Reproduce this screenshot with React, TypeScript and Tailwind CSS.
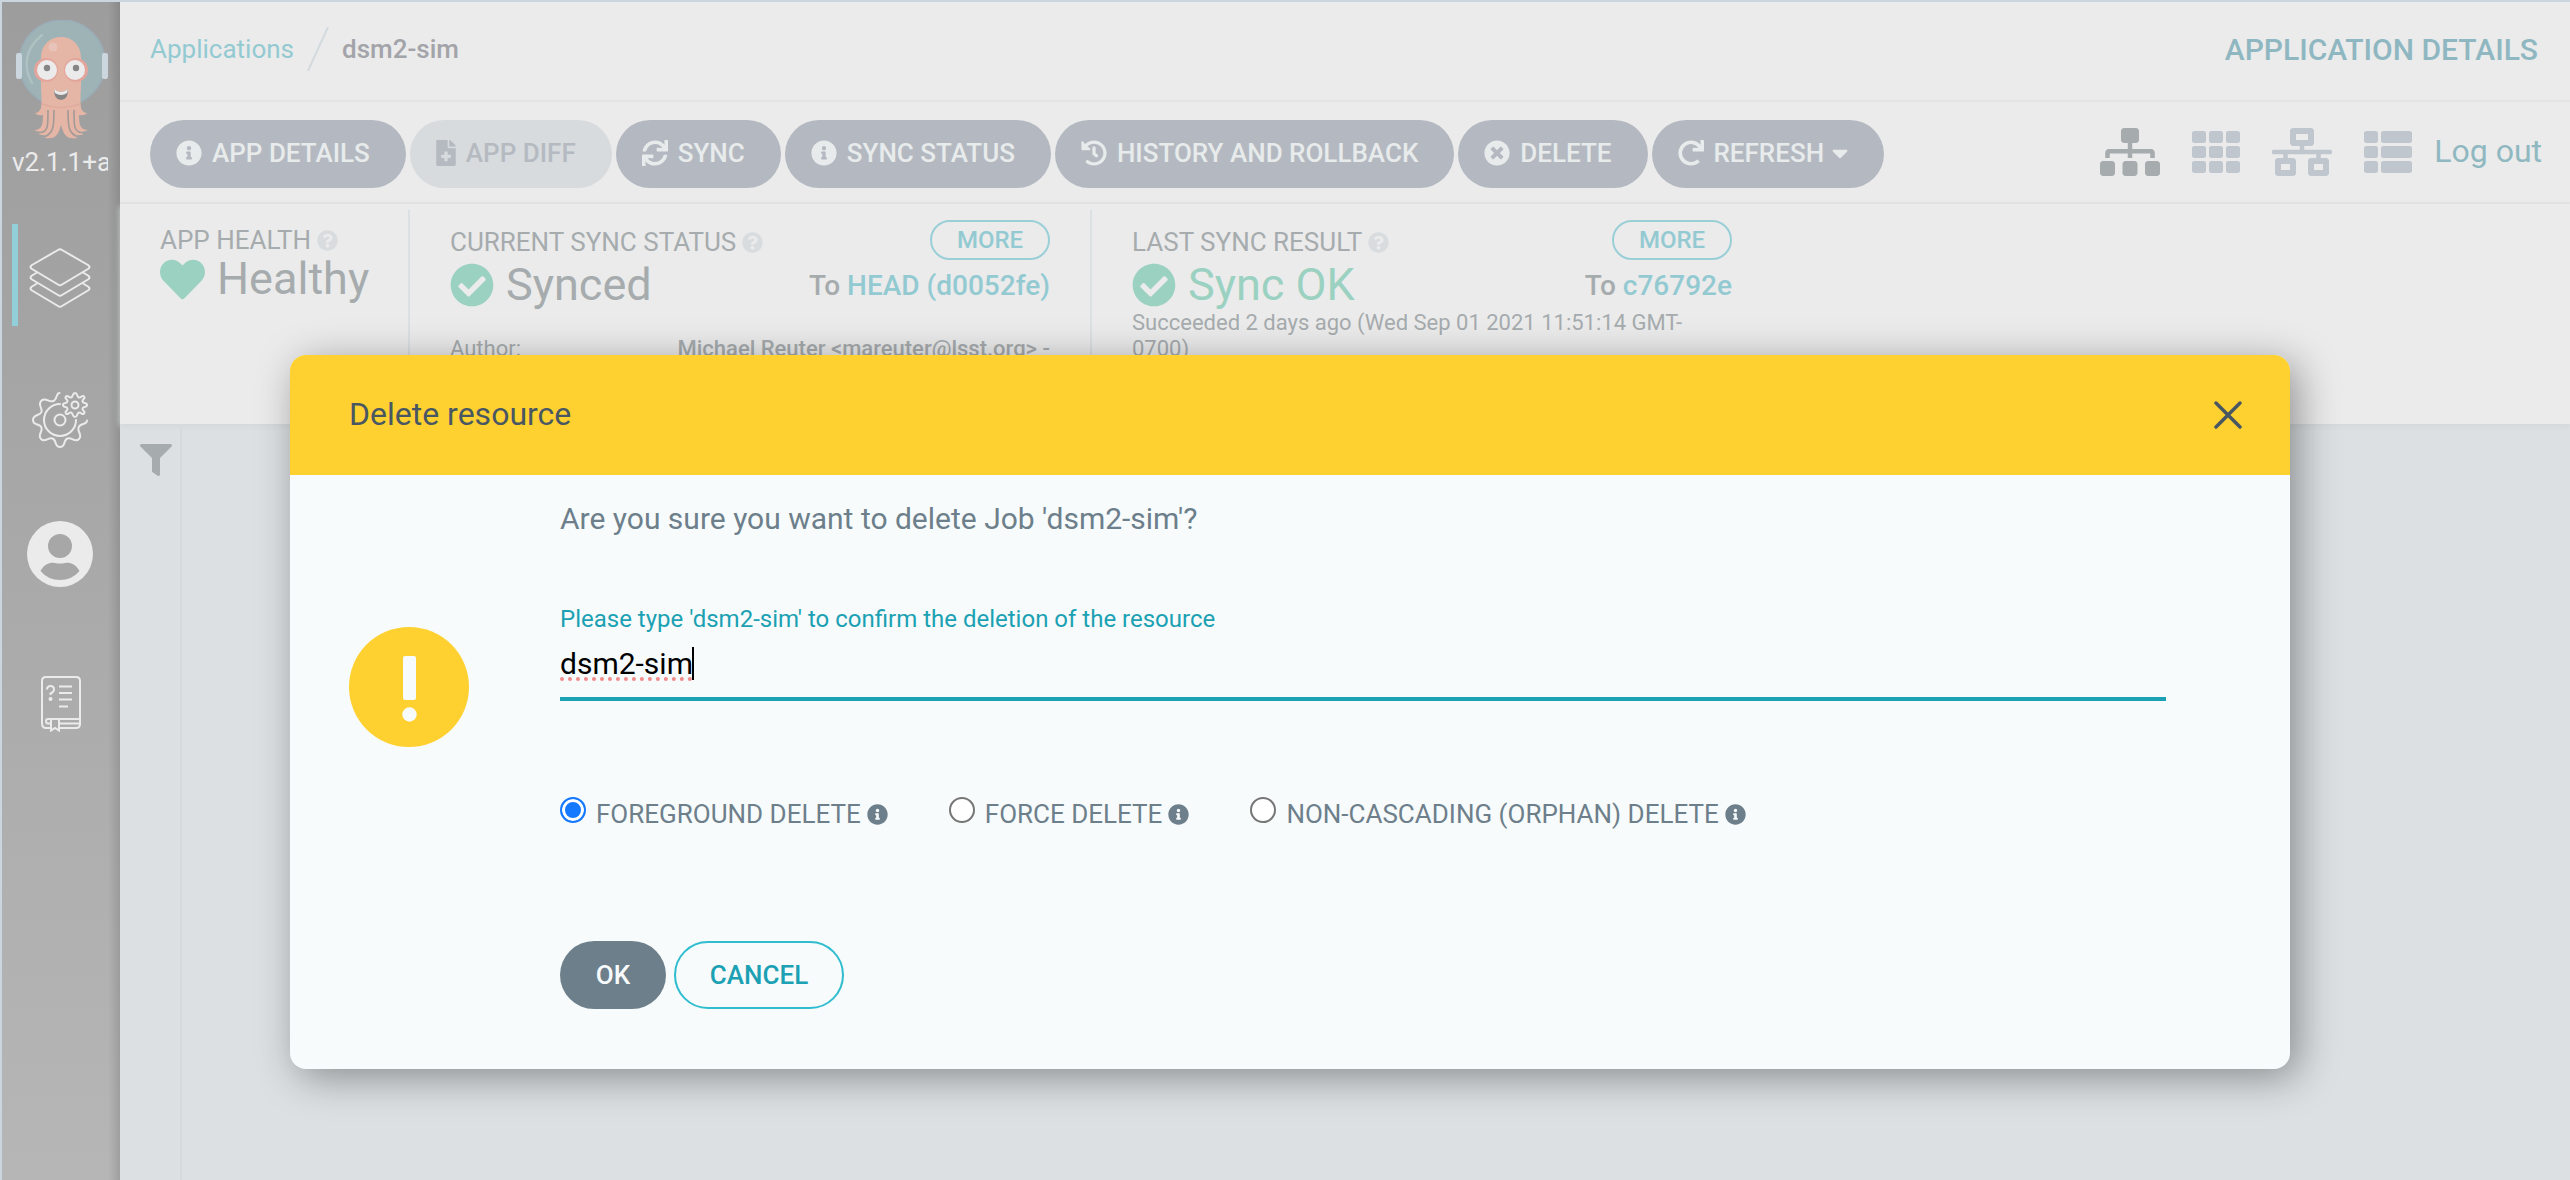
import type { ComponentType, ReactNode } from "react";
import {
  FaCaretDown,
  FaCheckCircle,
  FaFileMedical,
  FaFilter,
  FaHeart,
  FaHistory,
  FaInfoCircle,
  FaNetworkWired,
  FaQuestionCircle,
  FaRedo,
  FaSitemap,
  FaSync,
  FaTh,
  FaThList,
  FaTimesCircle,
} from "react-icons/fa";

type Icon = ComponentType<{ className?: string }>;

function Mascot() {
  return (
    <svg viewBox="0 0 92 120" className="ml-1 h-[120px] w-[92px]" aria-hidden="true">
      <circle cx="46" cy="43" r="43" fill="#9db3b5" stroke="#9aadb8" strokeWidth="1.500" />
      <rect x="0" y="33" width="6" height="26" rx="2" fill="#ccd6df" />
      <rect x="86" y="33" width="6" height="26" rx="2" fill="#ccd6df" />
      <path d="M26 15 C10 28 6 45 16 63" fill="none" stroke="#adc2c1" strokeWidth="2.500" strokeLinecap="round" />
      <path
        d="M25 38 C25 10 65 10 65 38 L65 66 Q64 82 65 88 Q67 93 71 93 Q69 96 63 95 C63 104 64 110 72 110 Q67 113 61 111 Q64 114 68 114 Q60 117 56 113 Q58 117 62 118 Q50 120 47 111 L45 105 L43 111 Q40 120 28 118 Q32 117 34 113 Q30 117 22 114 Q26 114 29 111 Q23 113 18 110 C26 110 27 104 27 95 Q21 96 19 93 Q23 93 25 88 Q26 82 25 66 Z"
        fill="#e5b5a6"
      />
      <path
        d="M32 90 C32 106 32 110 26 112.500 M38 90 C38 107 37 112 31 115.500 M52 90 C52 107 53 112 59 115.500 M58 90 C58 106 58 110 64 112.500"
        fill="none"
        stroke="#a39a97"
        strokeWidth="1.600"
      />
      <path d="M26 84 Q45 91 64 84" fill="none" stroke="#dfab9e" strokeWidth="1.500" />
      <circle cx="37" cy="27" r="4.500" fill="#e7c3b9" />
      <circle cx="30" cy="50" r="12" fill="#e3a59b" />
      <circle cx="60" cy="50" r="12" fill="#e3a59b" />
      <circle cx="31" cy="50" r="10" fill="#ebebeb" />
      <circle cx="59" cy="50" r="10" fill="#ebebeb" />
      <circle cx="31" cy="48" r="3.200" fill="#858585" />
      <circle cx="60" cy="48" r="3.200" fill="#858585" />
      <path d="M38 69 Q45 75 52 69 Q52 80 45 80 Q38 80 38 69 Z" fill="#858585" />
      <path d="M38 69 Q45 75 52 69 L51 73 Q45 77 39 73 Z" fill="#ebebeb" />
    </svg>
  );
}

function LayersIcon() {
  return (
    <svg viewBox="0 0 62 60" className="h-[60px] w-[62px]" fill="none" stroke="#ebebeb" strokeWidth="2" strokeLinejoin="round" aria-hidden="true">
      <path d="M29 2 Q31 0.500 33 2 L59 17 Q62 19 59 21 L33 36.500 Q31 38 29 36.500 L3 21 Q0 19 3 17 Z" />
      <path d="M8 24.500 L3 27.500 Q0 29.500 3 31.500 L29 47 Q31 48.500 33 47 L59 31.500 Q62 29.500 59 27.500 L54 24.500" />
      <path d="M8 35.500 L3 38.500 Q0 40.500 3 42.500 L29 58 Q31 59.500 33 58 L59 42.500 Q62 40.500 59 38.500 L54 35.500" />
    </svg>
  );
}

function GearsIcon() {
  return (
    <svg viewBox="0 0 56 56" className="size-14" fill="none" stroke="#ebebeb" strokeWidth="2" strokeLinecap="round" strokeLinejoin="round" aria-hidden="true">
      <circle cx="28" cy="28" r="5.500" />
      <path d="M28 12 A16 16 0 1 0 44 28" />
      <path d="M27.500 1 C24 1 25 8 21.500 9 C17 11 14 5 9.500 8.500 C5 13 11 16 9.500 20 C8 24 1 22 1 28 C1 34 8 31 9.500 35.500 C11 40 5 43 9 47 C13 51 16 45 20.500 46.500 C25 48 22 55 28 55 C34 55 31 48 35.500 46.500 C40 45 43 51 47 47 C51 43 45 40 46.500 35.500 C48 31 55 33 55 28.500" />
      <circle cx="43" cy="13" r="3.500" />
      <path d="M43 1 C46 1 44.500 5 47 5.500 C49.500 6 50 2.500 52 4.500 C54 6.500 50 7 50.500 9.500 C51 12 55 10 55 13 C55 16 51 14 50.500 16.500 C50 19 54 19.500 52 21.500 C50 23.500 49.500 20 47 20.500 C44.500 21 46 25 43 25 C40 25 41.500 21 39 20.500 C36.500 20 36 23.500 34 21.500 C32 19.500 36 19 35.500 16.500 C35 14 31 16 31 13 C31 10 35 12 35.500 9.500 C36 7 32 6.500 34 4.500 C36 2.500 36.500 6 39 5.500 C41.500 5 40 1 43 1 Z" />
    </svg>
  );
}

function UserIcon() {
  return (
    <svg viewBox="0 0 66 66" className="size-[66px]" aria-hidden="true">
      <circle cx="33" cy="33" r="33" fill="#ebebeb" />
      <circle cx="33" cy="25" r="12" fill="#a7a7a7" />
      <path d="M13.500 50 C18 42 24 41 28 42 Q33 43 38 42 C42 41 48 42 52.500 50 Q45 59 33 59 Q21 59 13.500 50 Z" fill="#a7a7a7" />
    </svg>
  );
}

function ManualIcon() {
  return (
    <svg viewBox="0 0 40 56" className="h-14 w-10" fill="none" stroke="#ebebeb" strokeWidth="2" aria-hidden="true">
      <path d="M10 52 H5 Q1 52 1 47 V5 Q1 1 5 1 H35 Q39 1 39 5 V48 Q39 52 35 52 H19" />
      <path d="M39 43 H7 Q5 43 5 45 Q5 47.500 7 47.500 H10 M19 47.500 H39" />
      <path d="M10 43 V54.500 L14 52 L18 54.500 V43" />
      <path d="M6 13.500 Q6 10 9.500 10 Q13 10 13 13.500 Q13 16 9.500 17.500 V19" />
      <circle cx="9.500" cy="23" r="1" fill="#ebebeb" />
      <path d="M18 10.500 H31 M18 17 H31 M18 23.500 H31 M18 30.500 H27" />
    </svg>
  );
}

type Tool = { icon: Icon; label: string; narrow?: boolean; disabled?: boolean; caret?: boolean };

function ToolButton({ icon: I, label, narrow, disabled, caret }: Tool) {
  return (
    <button
      type="button"
      disabled={disabled}
      className={
        "flex h-[68px] items-center rounded-full pr-9 pb-0.5 pl-[26px] text-[26px] font-medium whitespace-nowrap " +
        (disabled ? "bg-[#d7dbde] text-[#b5bac1]" : "bg-[#b4b9c1] text-[#e8ebeb]")
      }
    >
      <I className={narrow ? "mr-2.5 h-[26px] w-5 shrink-0" : "mr-2.5 size-[26px] shrink-0"} />
      {label}
      {caret && <FaCaretDown className="ml-2 h-[26px] w-4 shrink-0" />}
    </button>
  );
}

function Heading({ children }: { children: ReactNode }) {
  return (
    <h2 className="flex items-center gap-1.5 text-[26px] leading-8 whitespace-nowrap">
      {children}
      <FaQuestionCircle className="size-[21px] text-[#d8dcde]" />
    </h2>
  );
}

function MoreButton() {
  return (
    <button type="button" className="h-10 w-[120px] rounded-full border-2 border-[#9acfd7] text-2xl leading-none font-medium text-[#93cad2]">
      MORE
    </button>
  );
}

function DeleteOption({ label, checked }: { label: string; checked?: boolean }) {
  return (
    <label className="flex items-center text-[26px] leading-8 whitespace-nowrap">
      <input
        type="radio"
        name="delete-mode"
        defaultChecked={checked}
        className="mr-2.5 mb-2 size-[26px] appearance-none rounded-full border-2 border-[#767676] bg-white checked:border-[#1579ff] checked:bg-[#1579ff] checked:shadow-[inset_0_0_0_3px_white]"
      />
      {label}
      <FaInfoCircle className="ml-1.5 size-[21px]" />
    </label>
  );
}

const tools: Tool[] = [
  { icon: FaInfoCircle, label: "APP DETAILS" },
  { icon: FaFileMedical, label: "APP DIFF", narrow: true, disabled: true },
  { icon: FaSync, label: "SYNC" },
  { icon: FaInfoCircle, label: "SYNC STATUS" },
  { icon: FaHistory, label: "HISTORY AND ROLLBACK" },
  { icon: FaTimesCircle, label: "DELETE" },
  { icon: FaRedo, label: "REFRESH", caret: true },
];

export default function App() {
  return (
    <div className="relative flex min-h-screen border-t-2 border-l-2 border-[#cbd5de] bg-[#dce0e2] font-[Roboto,sans-serif] text-[#a6abae]">
      <nav className="flex w-[118px] shrink-0 flex-col items-center bg-[linear-gradient(to_left,#00000020,transparent_12px),linear-gradient(#9d9d9d,#b6b6b6)] pr-0.5">
        <div className="mt-[18px] flex flex-col items-center">
          <Mascot />
          <div className="mt-0.5 w-24 overflow-hidden text-[26px] leading-10 whitespace-nowrap text-[#ebebeb]">v2.1.1+a</div>
        </div>
        <a href="#applications" aria-label="Applications" className="mt-[42px] flex h-[102px] w-full items-center pl-2.5">
          <span className="h-full w-1.5 bg-[#93cfd8]" />
          <span className="ml-[11px] pt-1.5">
            <LayersIcon />
          </span>
        </a>
        <a href="#settings" aria-label="Settings" className="mt-[66px]">
          <GearsIcon />
        </a>
        <a href="#user" aria-label="User info" className="mt-[73px]">
          <UserIcon />
        </a>
        <a href="#docs" aria-label="Documentation" className="mt-[89px] ml-0.5">
          <ManualIcon />
        </a>
      </nav>

      <main className="flex min-w-0 grow flex-col">
        <header className="flex h-[100px] items-center justify-between border-b-2 border-[#e4e4e4] bg-[#ebebeb] pr-8 pb-1 pl-[30px]">
          <div className="flex items-center text-[26px]">
            <a href="#applications" className="text-[#93cad2]">
              Applications
            </a>
            <svg viewBox="0 0 22 44" className="mx-[13px] h-11 w-[22px]" aria-hidden="true">
              <path d="M21 0 L1 44" stroke="#d3dade" strokeWidth="2" />
            </svg>
            <span className="font-medium text-[#a3a4a9]">dsm2-sim</span>
          </div>
          <h1 className="text-[30px] font-medium text-[#8fb7c1]">APPLICATION DETAILS</h1>
        </header>

        <div className="flex h-[102px] items-center justify-between border-b-2 border-[#e4e4e4] bg-[#ebebeb] pr-7 pl-[30px]">
          <div className="flex gap-1 pt-1">
            {tools.map((t) => (
              <ToolButton key={t.label} {...t} />
            ))}
          </div>
          <div className="flex items-center text-5xl text-[#bfc6cd]">
            <button type="button" aria-label="Tree view" className="mr-8 text-[#a6abae]">
              <FaSitemap className="h-12 w-[60px]" />
            </button>
            <button type="button" aria-label="Pods view" className="mr-8">
              <FaTh />
            </button>
            <button type="button" aria-label="Network view" className="mr-8">
              <FaNetworkWired className="h-12 w-[60px]" />
            </button>
            <button type="button" aria-label="List view" className="mr-[22px]">
              <FaThList />
            </button>
            <a href="#logout" className="pb-0.5 text-[32px] text-[#8fb8c1]">
              Log out
            </a>
          </div>
        </div>

        <section className="flex h-[220px] shrink-0 overflow-hidden bg-[#ebebeb] pt-1.5 pl-10 shadow-[0_2px_6px_#d2d6d7]">
          <div className="w-[250px] shrink-0 border-r-2 border-[#dbe0e3] pt-3.5">
            <Heading>APP HEALTH</Heading>
            <div className="flex items-center gap-3 text-[45px] leading-[46px]">
              <FaHeart className="size-[45px] text-[#9bd1c1]" />
              Healthy
            </div>
          </div>
          <div className="w-[682px] shrink-0 border-r-2 border-[#dbe0e3] px-10">
            <div className="flex justify-between pt-2.5">
              <div className="pt-1.5">
                <Heading>CURRENT SYNC STATUS</Heading>
                <div className="mt-0.5 flex items-center gap-3 text-[45px] leading-[50px]">
                  <FaCheckCircle className="size-11 text-[#9bd1c1]" />
                  Synced
                </div>
              </div>
              <div className="flex flex-col items-end">
                <MoreButton />
                <p className="mt-2.5 text-[28px] leading-8 font-medium">
                  To <a href="#revision" className="text-[#93cad2]">HEAD (d0052fe)</a>
                </p>
              </div>
            </div>
            <div className="mt-[26px] flex justify-between text-[22px] leading-[26px]">
              <span>Author:</span>
              <span className="font-medium">Michael Reuter &lt;mareuter@lsst.org&gt; -</span>
            </div>
          </div>
          <div className="w-[640px] shrink-0 pl-10">
            <div className="flex justify-between pt-2.5">
              <div className="pt-1.5">
                <Heading>LAST SYNC RESULT</Heading>
                <div className="mt-0.5 flex items-center gap-3 text-[45px] leading-[50px] text-[#9bd1c1]">
                  <FaCheckCircle className="size-11" />
                  Sync OK
                </div>
              </div>
              <div className="flex flex-col items-end">
                <MoreButton />
                <p className="mt-2.5 text-[28px] leading-8 font-medium">
                  To <a href="#operation" className="text-[#93cad2]">c76792e</a>
                </p>
              </div>
            </div>
            <p className="text-[22px] leading-[26px]">Succeeded 2 days ago (Wed Sep 01 2021 11:51:14 GMT-0700)</p>
          </div>
        </section>

        <div className="flex grow">
          <aside className="flex w-[62px] shrink-0 flex-col border-r-2 border-[#d6dadd] pt-5 pl-5">
            <button type="button" aria-label="Filters">
              <FaFilter className="size-8" />
            </button>
          </aside>
        </div>
      </main>

      <div className="absolute inset-x-0 top-[353px] flex justify-center">
        <div
          role="dialog"
          aria-labelledby="dialog-title"
          className="mr-[280px] ml-[288px] flex grow flex-col overflow-hidden rounded-2xl bg-[#f7fbfb] text-[#6d7f8b] shadow-[8px_8px_40px_rgba(0,0,0,0.38)]"
        >
          <div className="flex h-[120px] items-center justify-between bg-[#ffd130] pr-12 pl-[59px] text-[#495763]">
            <h2 id="dialog-title" className="pb-0.5 text-[32px]">
              Delete resource
            </h2>
            <button type="button" aria-label="Close">
              <svg viewBox="0 0 28 28" className="size-7" stroke="currentColor" strokeWidth="3.500" strokeLinecap="round" aria-hidden="true">
                <path d="M2 2 L26 26 M26 2 L2 26" />
              </svg>
            </button>
          </div>
          <form className="flex items-start pr-[60px] pb-[60px] pl-[59px]">
            <svg viewBox="0 0 120 120" className="mt-[152px] size-[120px] shrink-0" aria-hidden="true">
              <circle cx="60" cy="60" r="60" fill="#ffd130" />
              <rect x="54" y="29" width="13" height="44" rx="2" fill="#f7fbfb" />
              <circle cx="60.500" cy="87.500" r="7.200" fill="#f7fbfb" />
            </svg>
            <div className="mr-16 ml-[91px] grow pt-6">
              <p className="text-[30px] leading-10">Are you sure you want to delete Job &apos;dsm2-sim&apos;?</p>
              <label htmlFor="confirm" className="mt-[66px] block text-2xl leading-7 text-[#1ba1b3]">
                Please type &apos;dsm2-sim&apos; to confirm the deletion of the resource
              </label>
              <div className="relative mt-2">
                <input
                  id="confirm"
                  defaultValue="dsm2-sim"
                  spellCheck={false}
                  className="block h-[60px] w-full border-b-4 border-[#1ba1b3] pb-3 text-[30px] text-black underline decoration-[#f28b8b] decoration-dotted decoration-4 underline-offset-4 outline-none"
                />
                <span className="absolute top-1.5 left-[132px] h-[33px] w-0.5 bg-black" />
              </div>
              <div className="mt-24 flex gap-[61px]">
                <DeleteOption label="FOREGROUND DELETE" checked />
                <DeleteOption label="FORCE DELETE" />
                <DeleteOption label="NON-CASCADING (ORPHAN) DELETE" />
              </div>
              <div className="mt-[110px] flex gap-2">
                <button type="button" className="h-[68px] w-[106px] rounded-full bg-[#6d7f8b] text-[26px] font-medium text-[#f7fbfb]">
                  OK
                </button>
                <button type="button" className="h-[68px] w-[170px] rounded-full border-2 border-[#2fbdcf] text-[26px] font-medium text-[#1ba1b3]">
                  CANCEL
                </button>
              </div>
            </div>
          </form>
        </div>
      </div>
    </div>
  );
}
